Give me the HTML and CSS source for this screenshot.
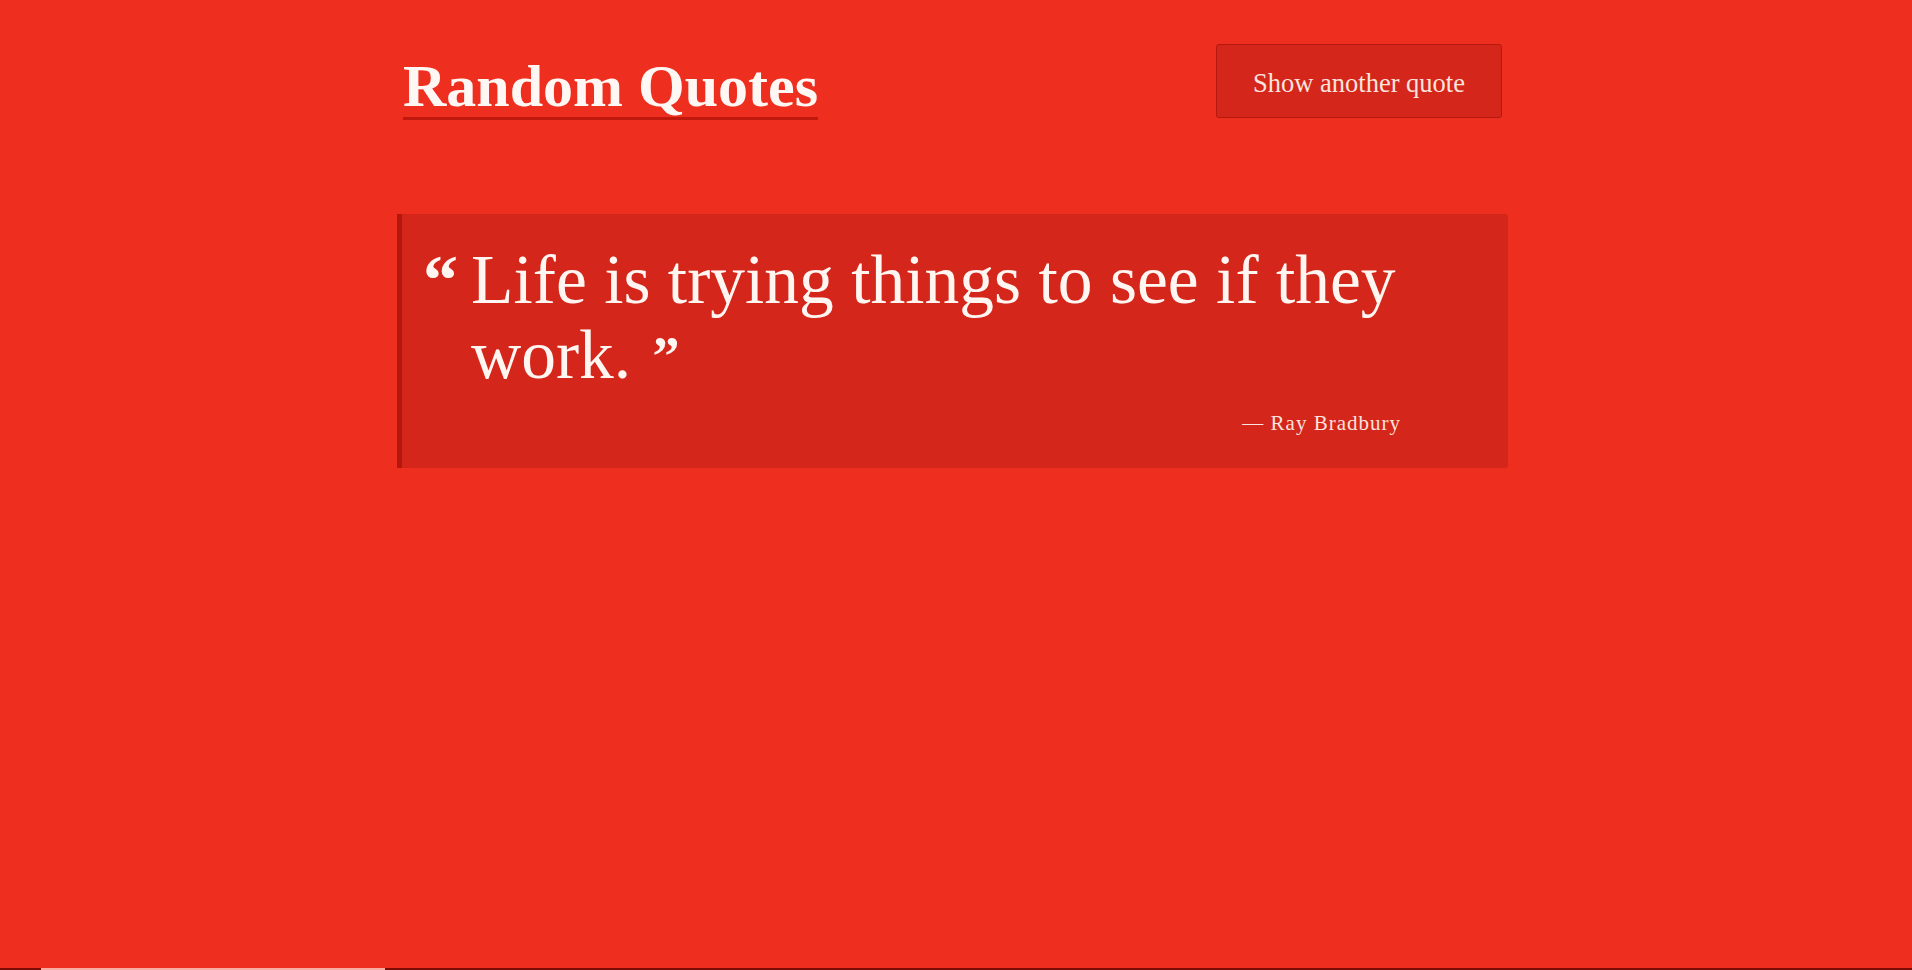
FILE: index.html
```html
<!DOCTYPE html>
<html lang="en">
<head>
<meta charset="utf-8">
<title>Random Quotes</title>
<link rel="stylesheet" href="styles.css">
</head>
<body>
<div class="page">
  <header class="header">
    <h1 class="title">Random Quotes</h1>
    <button class="btn" type="button">Show another quote</button>
  </header>
  <blockquote class="quote">
    <p class="text"><span class="open">&ldquo;</span>Life is trying things to see if they work. <span class="close">&rdquo;</span></p>
    <p class="cite">&mdash; Ray Bradbury</p>
  </blockquote>
</div>
<div class="bottom-bar"><span class="bottom-seg"></span></div>
</body>
</html>
```
FILE: styles.css
```css
html, body {
  margin: 0;
  padding: 0;
  height: 100%;
}
body {
  background: #ee2e1e;
  color: #fff6f2;
  font-family: "Liberation Serif", "Times New Roman", serif;
  overflow: hidden;
}
.page {
  width: 1111px;
  margin-left: 397px;
}
.header {
  display: flex;
  justify-content: space-between;
  align-items: flex-start;
  padding: 44px 6px 0 6px;
}
.title {
  margin: 11px 0 0 0;
  font-size: 60px;
  line-height: 62px;
  font-weight: 700;
  color: #fff7f3;
  border-bottom: 3px solid #c1180e;
}
.btn {
  display: flex;
  align-items: center;
  justify-content: center;
  box-sizing: border-box;
  height: 74px;
  width: 286px;
  padding: 4px 0 0 0;
  background: #d4261a;
  border: 1px solid #b4190f;
  border-radius: 3px;
  color: #fbe4df;
  font-family: "Liberation Serif", "Times New Roman", serif;
  font-size: 26.5px;
  line-height: 30px;
  cursor: pointer;
}
.quote {
  margin: 94px 0 0 0;
  background: #d4261a;
  border-left: 5px solid #b3170d;
  border-radius: 0 3px 3px 0;
  padding: 28px 104px 31px 69px;
}
.text {
  margin: 0;
  font-size: 69.5px;
  line-height: 75px;
  color: #fff6f2;
}
.open {
  display: inline-block;
  width: 48px;
  margin-left: -48px;
  font-weight: 700;
  font-size: 70px;
}
.close {
  font-weight: 700;
  font-size: 54px;
  line-height: 0;
  vertical-align: 4px;
  margin-left: 4px;
}
.cite {
  margin: 17px 0 0 0;
  padding-right: 3px;
  text-align: right;
  font-size: 21px;
  line-height: 28px;
  letter-spacing: 1px;
  color: #fbe4df;
}
.bottom-bar {
  position: fixed;
  left: 0;
  right: 0;
  bottom: 0;
  height: 2px;
  background: #7a0b05;
}
.bottom-seg {
  display: block;
  margin-left: 41px;
  width: 344px;
  height: 2px;
  background: #f7aba1;
}
```
